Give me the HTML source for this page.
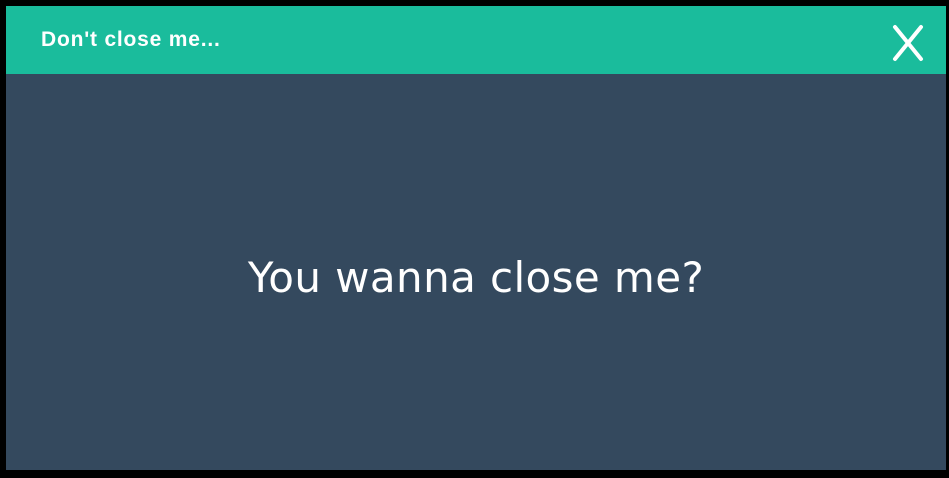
<!DOCTYPE html>
<html><head><style>
html,body{margin:0;padding:0;background:#000;width:949px;height:478px;overflow:hidden}
.win{position:absolute;left:6px;top:6px;width:940px;height:464px;background:#34495e}
.hd{position:absolute;left:0;top:0;width:940px;height:68px;background:#1abc9c}
.t{position:absolute;left:35px;top:22px;color:#fff;font:bold 21px "Liberation Sans",sans-serif;letter-spacing:0.8px}
.x{position:absolute;left:886px;top:18px}
.m{position:absolute;left:0;width:940px;top:247px;text-align:center;color:#fff;font:42px "Comic Sans MS","DejaVu Sans",sans-serif;letter-spacing:0.4px}
</style></head><body>
<div class="win">
<div class="hd"><div class="t">Don't close me...</div>
<svg class="x" width="32" height="38" viewBox="0 0 32 38"><path d="M3 3L29 35M29 3L3 35" stroke="#fff" stroke-width="4" stroke-linecap="round"/></svg></div>
<div class="m">You wanna close me?</div>
</div>
</body></html>
